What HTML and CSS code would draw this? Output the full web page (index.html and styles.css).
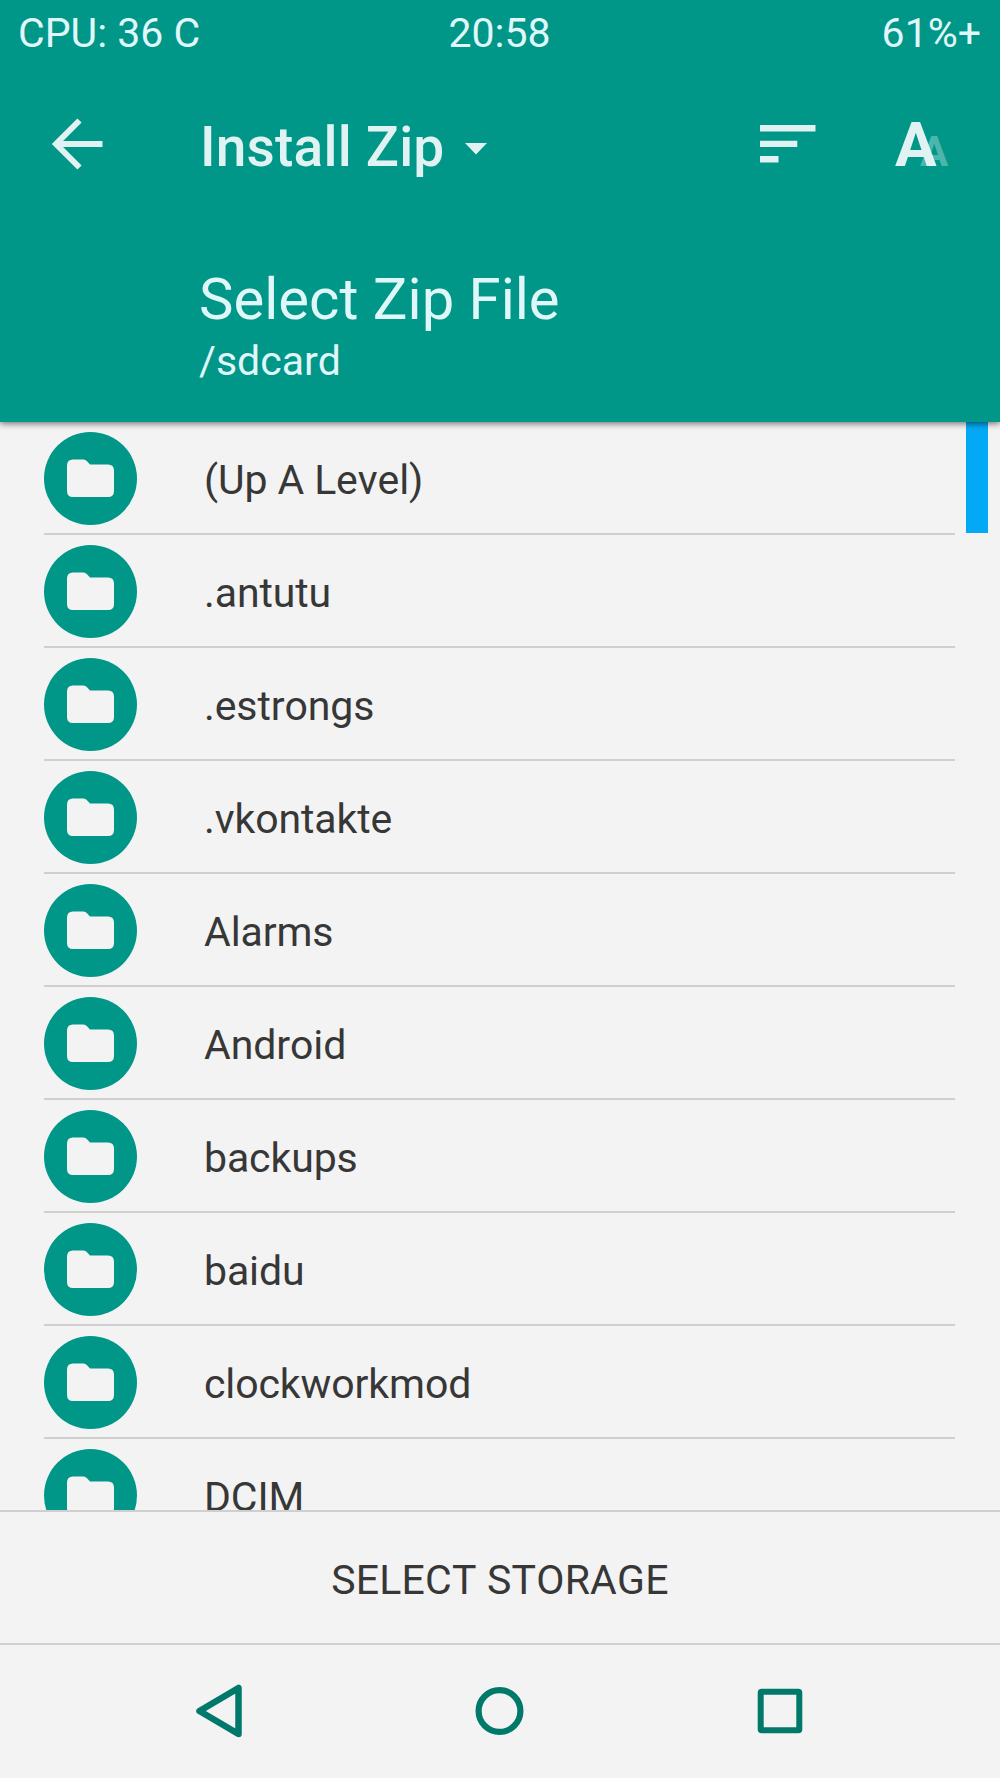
FILE: index.html
```html
<!DOCTYPE html>
<html lang="en">
<head>
    <meta charset="UTF-8">
    <meta name="viewport" content="width=device-width, initial-scale=1.0">
    <title>Install Zip</title>
    <link rel="stylesheet" href="styles.css">
</head>
<body>
    <!-- Folder icon shared by all rows -->
    <svg class="sprite" width="0" height="0">
        <symbol id="folder" viewBox="0 0 93 93">
            <circle cx="46.5" cy="46.5" r="46.5" fill="#009688"/>
            <path d="M29 27.5h10.5q2 0 3.300 1.500l3.200 3.500H64q6 0 6 6V59q0 6-6 6H29q-6 0-6-6V33.500q0-6 6-6z" fill="#f3f3f3"/>
        </symbol>
    </svg>

    <header class="header">
        <div class="status-bar">
            <span>CPU: 36 C</span>
            <span class="clock">20:58</span>
            <span class="battery">61%+</span>
        </div>
        <div class="toolbar">
            <svg class="back" width="52" height="52" viewBox="0 0 52 52">
                <path d="M27.500 2.500L4 26l23.500 23.500M4 26h46.500" fill="none" stroke="#e0f2f1" stroke-width="6"/>
            </svg>
            <h1 class="title">Install Zip</h1>
            <svg class="caret" width="24" height="12" viewBox="0 0 24 12">
                <path d="M1 0h22L12 11.500z" fill="#e0f2f1"/>
            </svg>
            <svg class="sort" width="56" height="38" viewBox="0 0 56 38">
                <path d="M0 0h55.500v6.500H0zM0 15.700h37.300v6.300H0zM0 31h18.500v6.500H0z" fill="#e0f2f1"/>
            </svg>
            <svg class="font-size" width="56" height="48" viewBox="0 0 56 48">
                <text x="25" y="46" class="letter-small">A</text>
                <text x="0" y="46" class="letter-big">A</text>
            </svg>
        </div>
        <div class="heading">
            <h2>Select Zip File</h2>
            <p>/sdcard</p>
        </div>
    </header>

    <main class="files">
        <ul class="file-list">
            <li><svg><use href="#folder"/></svg><span>(Up A Level)</span></li>
            <li><svg><use href="#folder"/></svg><span>.antutu</span></li>
            <li><svg><use href="#folder"/></svg><span>.estrongs</span></li>
            <li><svg><use href="#folder"/></svg><span>.vkontakte</span></li>
            <li><svg><use href="#folder"/></svg><span>Alarms</span></li>
            <li><svg><use href="#folder"/></svg><span>Android</span></li>
            <li><svg><use href="#folder"/></svg><span>backups</span></li>
            <li><svg><use href="#folder"/></svg><span>baidu</span></li>
            <li><svg><use href="#folder"/></svg><span>clockworkmod</span></li>
            <li><svg><use href="#folder"/></svg><span>DCIM</span></li>
        </ul>
        <div class="scrollbar"></div>
    </main>

    <button class="storage-button">SELECT STORAGE</button>

    <nav class="nav-bar">
        <svg width="54" height="54" viewBox="0 0 54 54">
            <path d="M46.500 4v46L7.500 27z" fill="none" stroke="#00796b" stroke-width="6.500" stroke-linejoin="round"/>
        </svg>
        <svg width="54" height="54" viewBox="0 0 54 54">
            <circle cx="26.500" cy="27" r="20.900" fill="none" stroke="#00796b" stroke-width="6.200"/>
        </svg>
        <svg width="54" height="54" viewBox="0 0 54 54">
            <rect x="6.700" y="7.700" width="38.600" height="38.600" rx="1" fill="none" stroke="#00796b" stroke-width="6" stroke-linejoin="round"/>
        </svg>
    </nav>
</body>
</html>
```
FILE: styles.css
```css
* {
    box-sizing: border-box;
}

body {
    margin: 0;
    height: 1778px;
    display: flex;
    flex-direction: column;
    background-color: #f3f3f3;
    color: #373737;
    font-family: Roboto, sans-serif;
    font-size: 41px;
    font-kerning: none;
    overflow: hidden;
}

svg {
    display: block;
    flex-shrink: 0;
}

.sprite {
    position: absolute;
}

/* Header */
.header {
    position: relative; /* Keeps the shadow above the list */
    z-index: 1;
    height: 422px;
    flex-shrink: 0;
    background-color: #009688;
    color: #e0f7fa;
    box-shadow: 0 2px 6px rgba(0, 0, 0, 0.5);
}

.status-bar {
    display: grid;
    grid-template-columns: 1fr auto 1fr;
    height: 66px;
    padding: 0 19px 0 18px;
    line-height: 66px;
}

.battery {
    text-align: right;
}

.toolbar {
    display: flex;
    align-items: center;
    height: 162px;
    padding: 0 49px 0 52px;
    color: #e0f2f1;
}

.back {
    margin-bottom: 6px;
}

.title {
    margin: 0 0 0 96px;
    font-size: 55px;
    font-weight: 500;
    letter-spacing: 0.2px;
}

.caret {
    margin: 4px 0 0 20px;
}

.sort {
    margin: 0 0 6px auto;
}

.font-size {
    margin: 0 0 6px 79px;
    overflow: visible;
}

.letter-big,
.letter-small {
    font-weight: 700;
    fill: #e0f2f1;
}

.letter-big {
    font-size: 62px;
}

.letter-small {
    font-size: 42px;
    fill: #4db6ac;
}

.heading {
    padding: 38px 0 0 199px;
}

.heading h2 {
    margin: 0;
    font-size: 58px;
    font-weight: 400;
    line-height: 66px;
}

.heading p {
    margin: 0;
    line-height: 59px;
}

/* File list */
.files {
    display: flex;
    height: 1088px;
    flex-shrink: 0;
    overflow: hidden;
}

.file-list {
    width: 911px;
    margin: 0 11px 0 44px;
    padding: 0;
    list-style: none;
    letter-spacing: -0.1px;
}

.file-list li {
    display: flex;
    gap: 67px;
    height: 113px;
    padding-top: 10px;
    border-bottom: 2px solid #cfcfcf;
    line-height: 97px;
}

.file-list svg {
    width: 93px;
    height: 93px;
}

.scrollbar {
    width: 22px;
    height: 111px;
    background-color: #03a9f4;
}

/* Bottom */
.storage-button {
    height: 133px;
    padding: 4px 0 0;
    border: none;
    border-top: 2px solid #cfcfcf;
    background: none;
    color: inherit;
    font: inherit;
    letter-spacing: 0.2px;
}

.nav-bar {
    display: flex;
    justify-content: center;
    gap: 227px;
    height: 135px;
    padding-top: 39px;
    border-top: 2px solid #cfcfcf;
}
```
